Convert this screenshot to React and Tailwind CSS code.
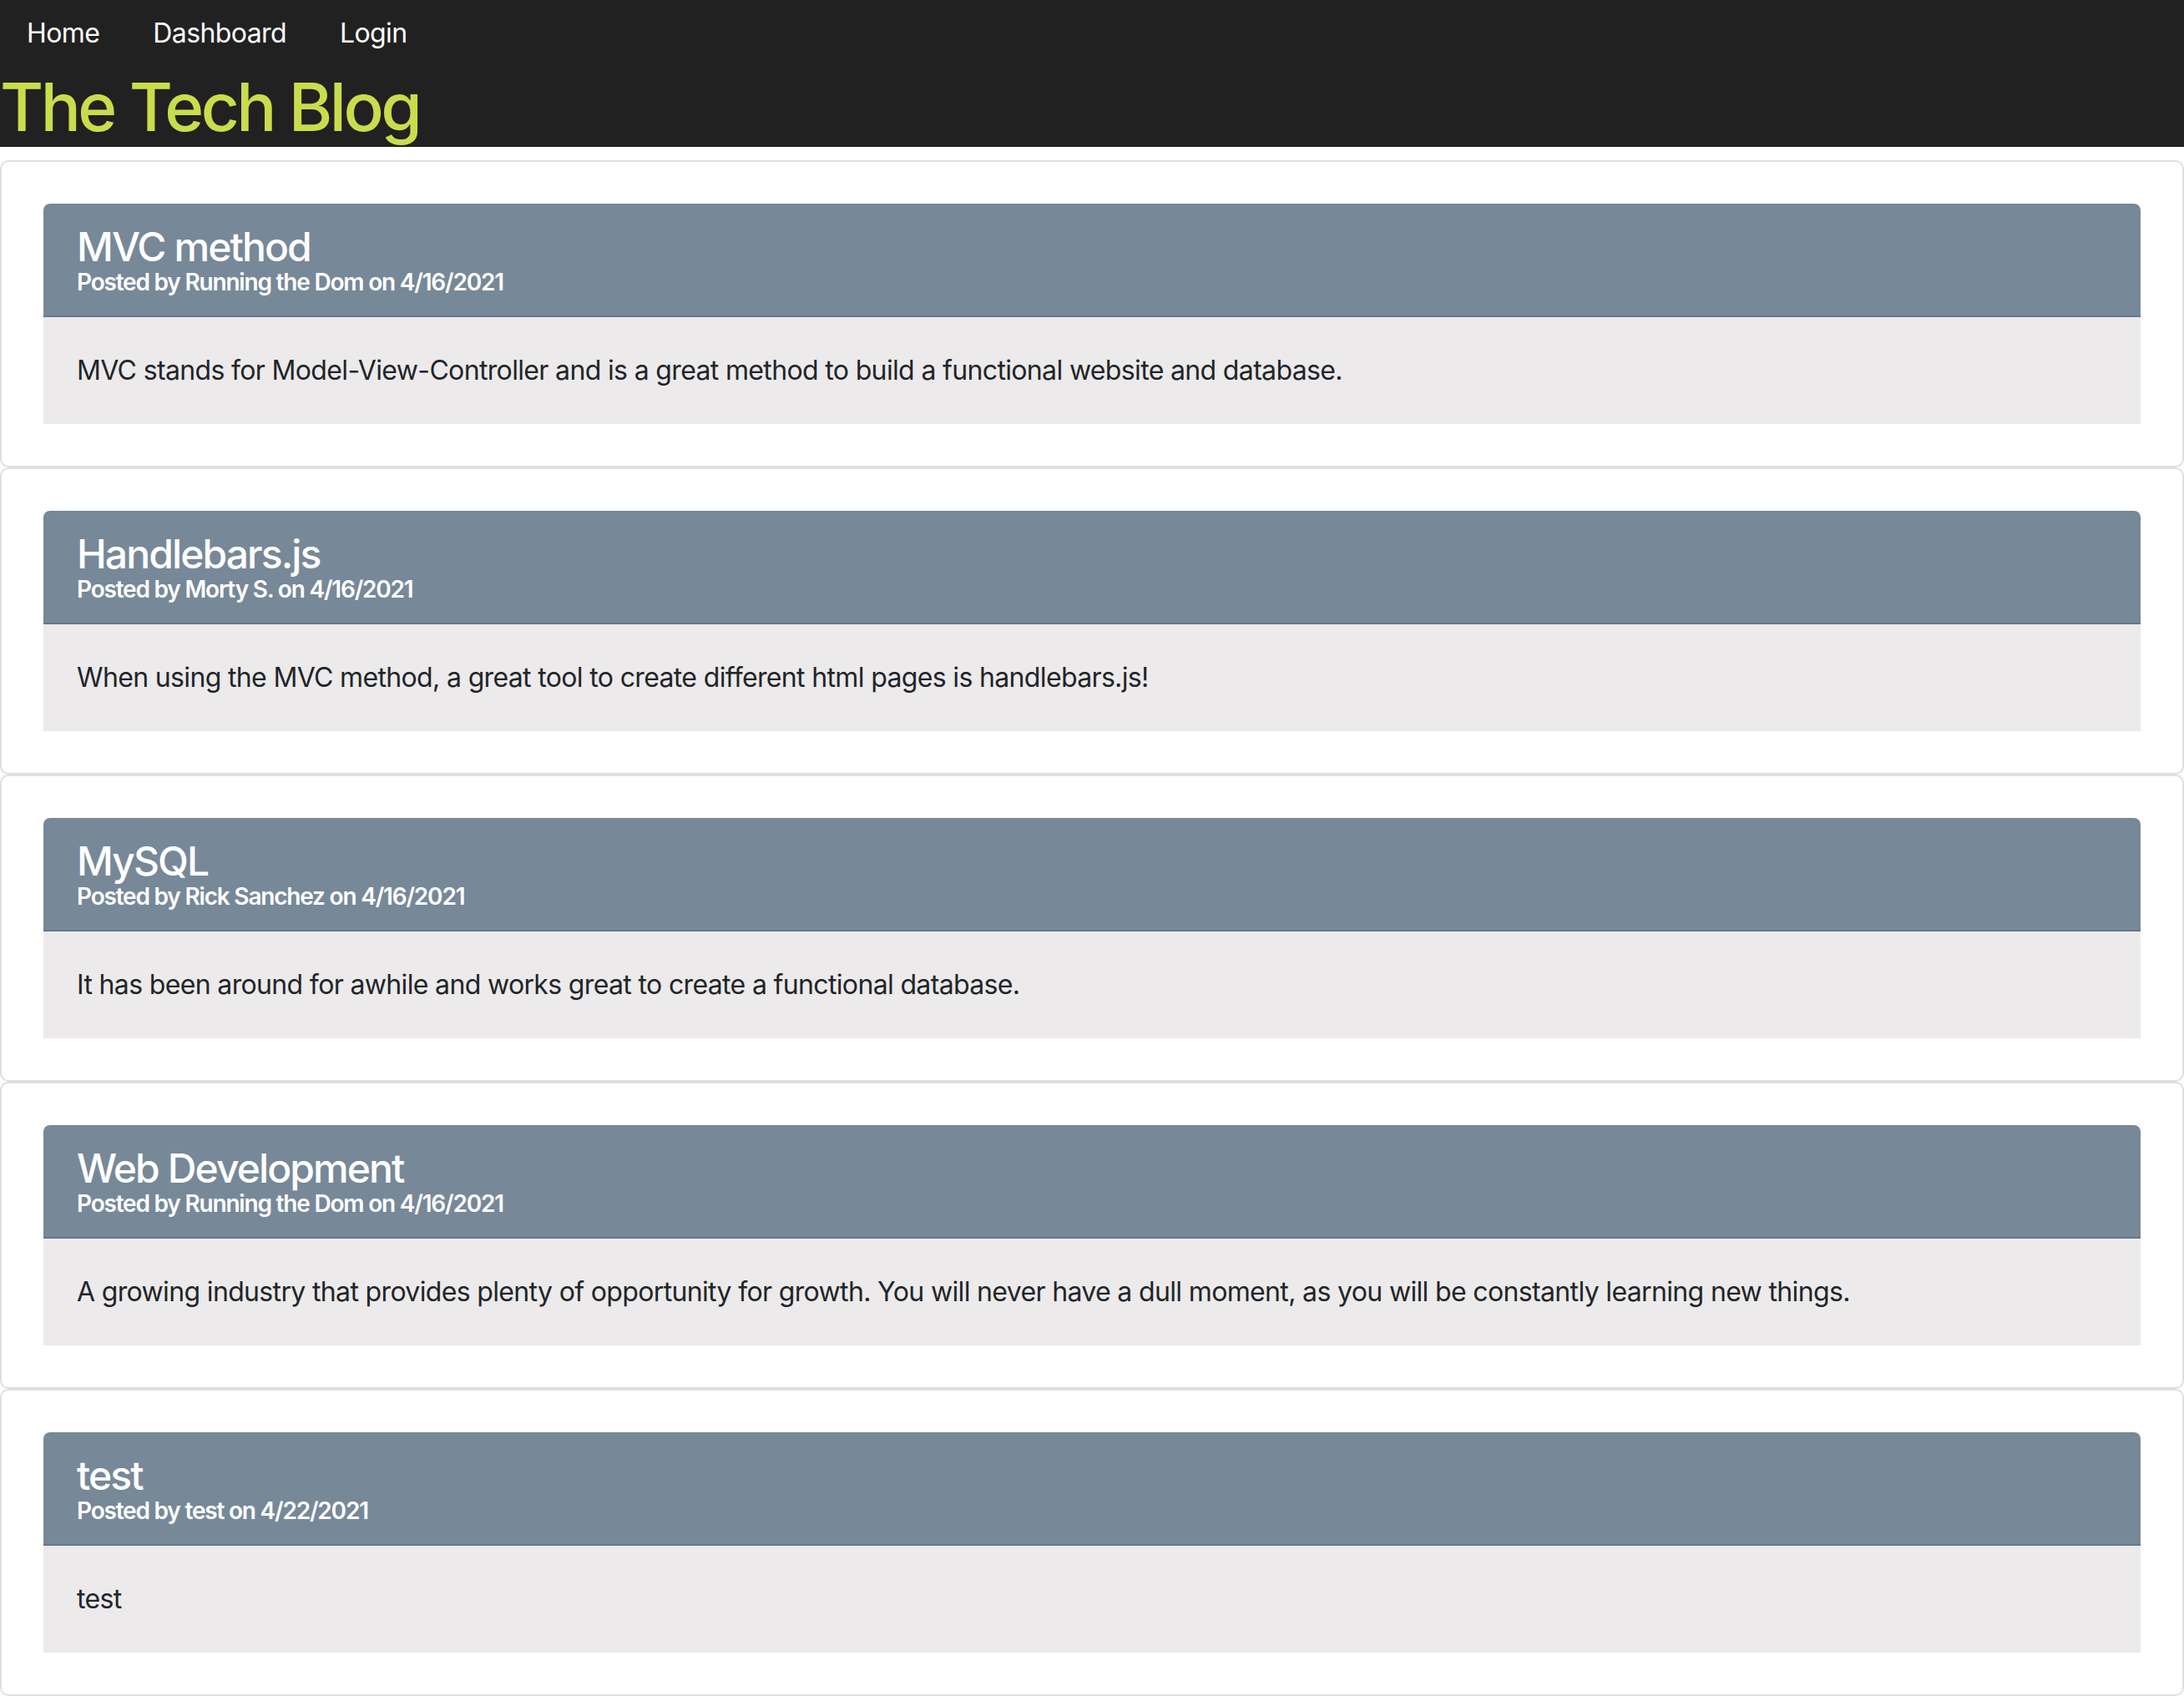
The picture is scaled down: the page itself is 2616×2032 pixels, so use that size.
import React from 'react'

const posts = [
    {
        title: 'MVC method',
        author: 'Running the Dom',
        date: '4/16/2021',
        body: 'MVC stands for Model-View-Controller and is a great method to build a functional website and database.',
    },
    {
        title: 'Handlebars.js',
        author: 'Morty S.',
        date: '4/16/2021',
        body: 'When using the MVC method, a great tool to create different html pages is handlebars.js!',
    },
    {
        title: 'MySQL',
        author: 'Rick Sanchez',
        date: '4/16/2021',
        body: 'It has been around for awhile and works great to create a functional database.',
    },
    {
        title: 'Web Development',
        author: 'Running the Dom',
        date: '4/16/2021',
        body: 'A growing industry that provides plenty of opportunity for growth. You will never have a dull moment, as you will be constantly learning new things.',
    },
    {
        title: 'test',
        author: 'test',
        date: '4/22/2021',
        body: 'test',
    },
]

function Post({ post }) {
    return (
        <div className="border-2 border-[#dfdfdf] rounded-[10px] p-[50px]">
            <div className="bg-[#778899] rounded-t-lg border-b-2 border-[#68778a] px-10 pt-[28px] pb-[26px] text-white">
                <h2 className="text-[48px] leading-[48px] font-medium tracking-[-1.9px]">{post.title}</h2>
                <p className="mt-1 text-[28px] leading-[28px] font-semibold tracking-[-1.2px]">
                    Posted by {post.author} on {post.date}
                </p>
            </div>
            <div className="bg-[#eceaeb] p-10 text-[32px] leading-[48px] text-[#212529] tracking-[-0.65px]">
                {post.body}
            </div>
        </div>
    )
}

function App() {
    return (
        <div className="min-h-screen bg-white font-['Inter',sans-serif]">
            <header className="bg-[#212121]">
                <nav className="flex py-4">
                    <a href="#" className="px-8 text-[32px] leading-[48px] text-white tracking-[-0.6px]">Home</a>
                    <a href="#" className="px-8 text-[32px] leading-[48px] text-white tracking-[-0.6px]">Dashboard</a>
                    <a href="#" className="px-8 text-[32px] leading-[48px] text-white tracking-[-0.6px]">Login</a>
                </nav>
                <h1 className="text-[80px] leading-[96px] font-medium text-[#c9dd4c] tracking-[-3.5px]">The Tech Blog</h1>
            </header>
            <main className="pt-4">
                {posts.map((post, i) => (
                    <Post key={i} post={post} />
                ))}
            </main>
        </div>
    )
}

export default App
